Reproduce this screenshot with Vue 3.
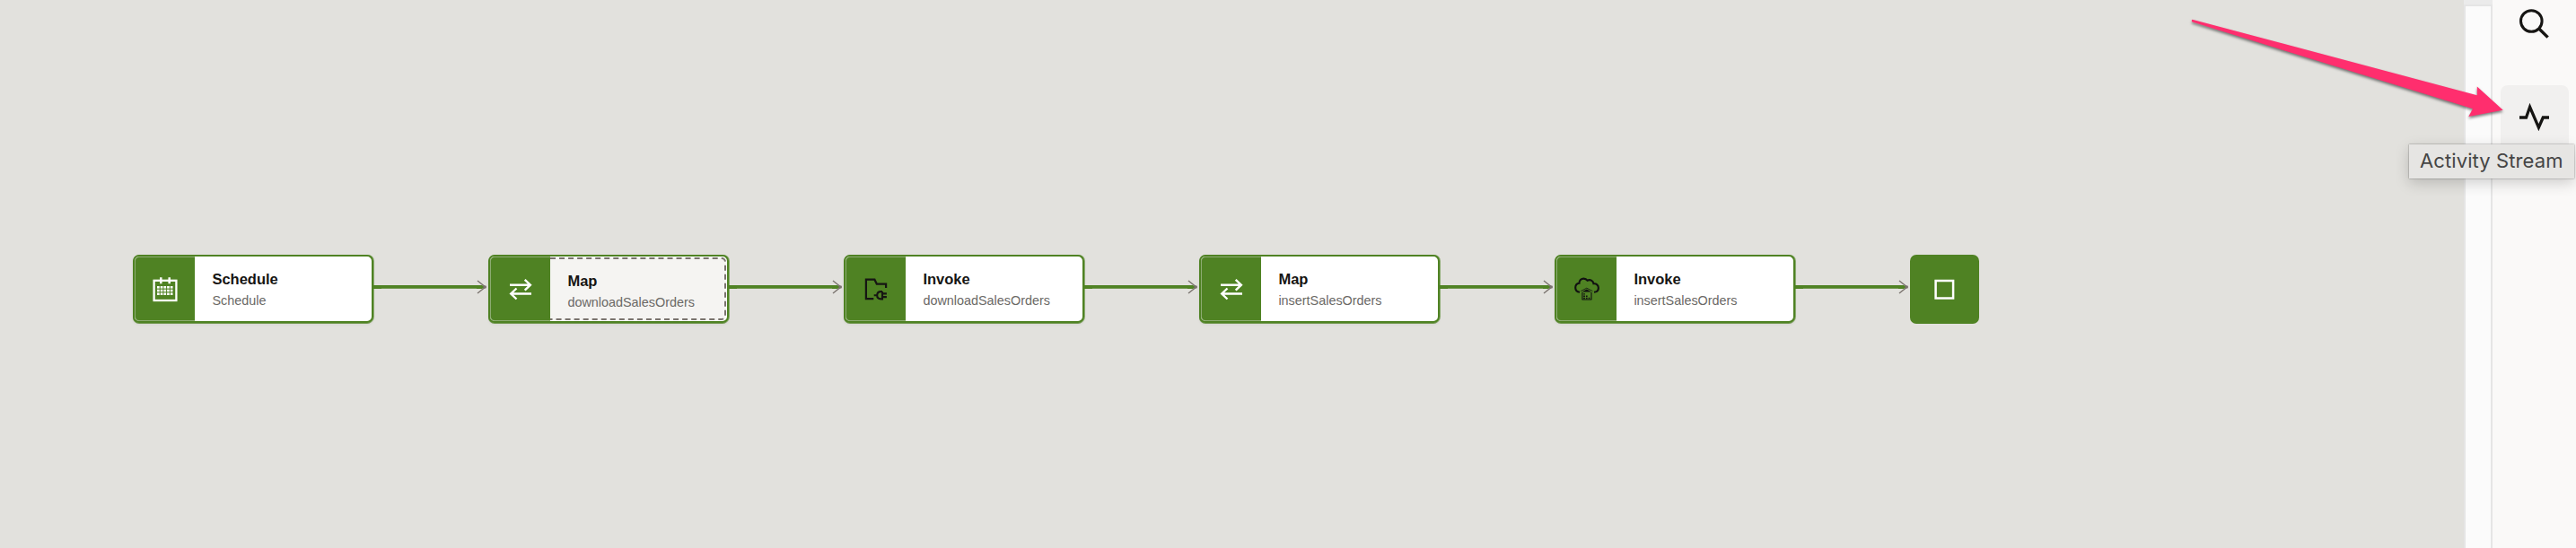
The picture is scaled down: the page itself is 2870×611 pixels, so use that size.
<script setup>
const steps = [
  { icon: 'calendar', title: 'Schedule', sub: 'Schedule' },
  { icon: 'map', title: 'Map', sub: 'downloadSalesOrders', selected: true },
  { icon: 'folder', title: 'Invoke', sub: 'downloadSalesOrders' },
  { icon: 'map', title: 'Map', sub: 'insertSalesOrders' },
  { icon: 'cloud', title: 'Invoke', sub: 'insertSalesOrders' },
]
const cols = [27, 30.7, 34.4, 38.1, 41.8]
const rows = [35, 38.7, 42.4]
</script>

<template>
  <div class="app">
    <main class="canvas">
      <div class="flow">
        <template v-for="(s, i) in steps" :key="i">
          <article class="node" :class="{ selected: s.selected }">
            <div class="panel">
              <svg v-if="s.icon === 'calendar'" class="glyph" viewBox="0 0 70 77">
                <rect x="23.6" y="28.8" width="24.8" height="22.2" fill="none" stroke="#fff" stroke-width="2.3" />
                <path d="M31.3 25.3v7M40.7 25.3v7" stroke="#fff" stroke-width="2.5" />
                <template v-for="y in rows" :key="y">
                  <rect v-for="x in cols" :key="x" :x="x" :y="y" width="2.7" height="2.6" fill="#fff" />
                </template>
              </svg>
              <svg v-else-if="s.icon === 'map'" class="glyph" viewBox="0 0 70 77">
                <path d="M24 33.7H46.8M40.7 27.8L46.9 33.7L40.7 39.7M48 43.5H25.2M31.5 37.5L25.2 43.5L31.5 49.5" fill="none" stroke="#fff" stroke-width="2.4" />
              </svg>
              <svg v-else-if="s.icon === 'folder'" class="glyph" viewBox="0 0 70 77">
                <path d="M33.3 49.2H24.9V27.7H34.4L36.8 32.6H47.1V37" fill="none" stroke="#161513" stroke-width="2.2" />
                <path d="M33.7 45.3H37M43 41.1V49.4H41.4Q37.2 49.4 37.2 45.3Q37.2 41.1 41.4 41.1H43M43 43.4H47.9M43 47.1H47.9" fill="none" stroke="#161513" stroke-width="2.1" />
              </svg>
              <svg v-else class="glyph" viewBox="0 0 70 77">
                <path d="M28 41.7C25 41.4 23.2 39.2 23.2 36.7C23.2 34 25 32 27.5 31.7C27.4 28.8 29.6 26.6 32.4 26.6C34.2 26.6 35.6 27.3 36.5 28.7C39.5 27.2 43 28.8 43.5 32.3C46.4 31.8 48.9 34 48.9 37C48.9 39.6 47 41.6 44 41.8" fill="none" stroke="#111" stroke-width="2.1" />
                <path d="M29.2 40.6L35.8 37.2L42.4 40.6" fill="none" stroke="#111" stroke-width=".8" />
                <path d="M30.6 41.4L35.8 38.6L41 41.4Z" fill="#111" />
                <path d="M30.9 42V50M41 42V50M30.5 50H41.4" fill="none" stroke="#111" stroke-width="1.1" />
                <path d="M32.2 43.2h1.7v1.3h-1.7zM32.2 45.5h1.7v1.5h-1.7zM32.2 47.8h1.7v1.4h-1.7zM35 45.5h1.6v1.5h-1.6zM35 47.8h1.6v1.4h-1.6zM37.7 47.8h1.6v1.4h-1.6z" fill="#111" />
              </svg>
            </div>
            <div class="body">
              <div class="title">{{ s.title }}</div>
              <div class="sub">{{ s.sub }}</div>
            </div>
          </article>
          <svg class="link" viewBox="-1 0 128 77">
            <rect x="-1" y="34" width="9" height="4" fill="#4f8223" />
            <rect x="8" y="34" width="110" height="3" fill="#4f8223" />
            <rect x="8" y="37" width="106" height="1" fill="#6f964c" />
            <path d="M114 34H120L124 36L120 38H114Z" fill="#4f8223" />
            <path d="M115 29L123.8 36L115 43" fill="none" stroke="#7a736e" stroke-width="1.4" />
            <path d="M121.5 34L124.8 34.7V37.3L121.5 38Z" fill="#7a736e" />
          </svg>
        </template>
        <div class="end">
          <svg class="glyph" viewBox="0 0 77 77">
            <rect x="28.6" y="29" width="19.5" height="19.5" fill="none" stroke="#fff" stroke-width="2.5" />
          </svg>
        </div>
      </div>
    </main>
    <div class="gutter"><div class="track"></div></div>
    <aside class="rail">
      <button class="tool search" aria-label="Search">
        <svg width="76" height="76" viewBox="0 0 76 76">
          <circle cx="34.3" cy="42.5" r="11.8" fill="none" stroke="#161513" stroke-width="3" />
          <path d="M42.8 51L52.6 60.6" stroke="#161513" stroke-width="3.4" />
        </svg>
      </button>
      <button class="tool active" aria-label="Activity">
        <svg width="76" height="76" viewBox="0 0 76 76">
          <path d="M21 36H28.5L32.6 24.3L42.4 47.2L47.3 36H54" fill="none" stroke="#161513" stroke-width="3.3" />
        </svg>
      </button>
    </aside>
    <svg class="pointer" viewBox="0 0 370 130">
      <path d="M12.5 21.7L329.8 106.3V96.5L358.7 122.7L320.3 130L325 121.2L12.5 24.6Q11 23 12.5 21.7Z" fill="#ff2e6e" />
    </svg>
    <div class="tip">Activity Stream</div>
  </div>
</template>

<style>
body {
  margin: 0;
}
</style>

<style scoped>
.app {
  position: relative;
  display: flex;
  width: 2870px;
  height: 611px;
  overflow: hidden;
  background: #e2e1dd;
  font-family: "Liberation Sans", Arial, sans-serif;
}
.canvas {
  width: 2745px;
  padding: 284px 0 0 148px;
  box-sizing: border-box;
}
.flow {
  display: flex;
}
.node {
  display: flex;
  flex: none;
  width: 268px;
  height: 76px;
  box-sizing: border-box;
  border: 2px solid #4f8223;
  border-radius: 7px;
  background: #fff;
  box-shadow: 1px 0 0 #8cab71, 0 1px 0 #6f964c, 0 2px 3px rgba(0, 0, 0, 0.06);
}
.panel {
  width: 67.4px;
  flex: none;
  box-sizing: border-box;
  background: #4f8223;
  border: solid #8cab71;
  border-width: 1px 0 1px 1px;
  border-radius: 5px 0 0 5px;
}
.panel .glyph {
  display: block;
  width: 70px;
  height: 77px;
  margin: -3px 0 0 -3px;
}
.body {
  flex: 1;
  padding: 14px 0 0 19px;
  border-radius: 0 5px 5px 0;
  box-sizing: border-box;
  white-space: nowrap;
}
.title {
  font-size: 16.5px;
  line-height: 22px;
  font-weight: 700;
  color: #161513;
}
.sub {
  margin-top: 1px;
  font-size: 14.4px;
  line-height: 24px;
  color: #6b6966;
}
.selected .body {
  margin: 1px 1px 1px 0;
  padding-top: 13px;
  border: 2px dashed #7a736e;
  border-left: 0;
  background: #f5f4f2;
}
.link {
  flex: none;
  width: 128px;
  height: 77px;
}
.end {
  flex: none;
  width: 77px;
  height: 77px;
  border-radius: 7px;
  background: #4f8223;
}
.end .glyph {
  display: block;
}
.gutter {
  width: 32px;
  padding-top: 5px;
  box-sizing: border-box;
  background: #ebebeb;
}
.track {
  height: 606px;
  box-sizing: border-box;
  border: 2px solid #e5e5e5;
  border-bottom: 0;
  background: #fbfbfb;
}
.rail {
  width: 93px;
  padding-left: 9px;
  box-sizing: border-box;
  background: #faf9f8;
}
.tool {
  display: block;
  width: 76px;
  height: 76px;
  padding: 0;
  border: 0;
  border-radius: 8px;
  background: none;
}
.tool svg {
  display: block;
}
.search {
  margin-top: -19px;
}
.active {
  margin-top: 38px;
  background: #f1f0ef;
}
.pointer {
  position: absolute;
  left: 2430px;
  top: 0;
  width: 370px;
  height: 130px;
  overflow: visible;
  filter: drop-shadow(0 2px 1.5px rgba(0, 0, 0, 0.5));
}
.tip {
  position: absolute;
  left: 2684px;
  top: 161px;
  width: 184px;
  height: 38px;
  padding-left: 12px;
  box-sizing: border-box;
  background: #e6e5e3;
  box-shadow: 0 0 1.5px rgba(0, 0, 0, 0.5), 0 5px 16px rgba(0, 0, 0, 0.18);
  color: #454545;
  font: 400 22px/37px Inter, sans-serif;
  letter-spacing: 0.1px;
  white-space: nowrap;
}
</style>
